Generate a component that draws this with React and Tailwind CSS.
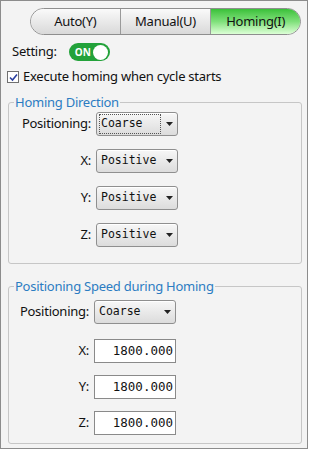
import React, { useState } from 'react';

const SelectBox = ({ value, focused }) => (
  <div className="w-[82px] h-[24px] rounded-[3px] border border-[#8f8f8f] bg-gradient-to-b from-[#f7f7f7] to-[#dcdcdc] flex items-center pl-[2px] pr-[4px] shadow-[inset_0_1px_0_#ffffff]">
    <div className={`flex-1 h-[20px] flex items-center pl-[1px] mr-[5px] ${focused ? 'border border-dotted border-[#555]' : 'border border-transparent'}`}>
      <span className="font-['DejaVu_Sans_Mono',monospace] text-[11.5px] tracking-normal text-[#111]">{value}</span>
    </div>
    <svg width="7" height="4" viewBox="0 0 7 4">
      <polygon points="0,0 7,0 3.5,4" fill="#222" />
    </svg>
  </div>
);

const NumInput = ({ value }) => (
  <div className="w-[82px] h-[24px] border border-[#8a8a8a] bg-white flex items-center justify-end pr-[2px]">
    <span className="font-['DejaVu_Sans_Mono',monospace] text-[12.5px] tracking-normal text-[#111]">{value}</span>
  </div>
);

const Row = ({ label, labelW, className = '', children }) => (
  <div className={`flex items-center ${className}`}>
    <span className={`${labelW} text-right pr-[5px] text-[13px] text-[#111]`}>{label}</span>
    {children}
  </div>
);

const App = () => {
  const [tab, setTab] = useState('homing');
  const tabs = [
    { id: 'auto', label: 'Auto(Y)', w: 'w-[89px]' },
    { id: 'manual', label: 'Manual(U)', w: 'w-[91px]' },
    { id: 'homing', label: 'Homing(I)', w: 'w-[90px]' },
  ];

  return (
    <div className="w-[308px] h-[449px] border border-[#8c8c8c] bg-[#f3f3f3] font-['Noto_Sans',sans-serif] tracking-[-0.25px] text-[#111] pt-[7px]">
      {/* Mode tabs */}
      <div className="ml-[29px] flex h-[27px] w-[271px] rounded-full border border-[#8e8e8e] overflow-hidden">
        {tabs.map((t, i) => (
          <button
            key={t.id}
            onClick={() => setTab(t.id)}
            className={`${t.w} h-full text-[13px] flex items-center justify-center ${i > 0 ? 'border-l border-[#9a9a9a]' : ''} ${
              tab === t.id
                ? 'bg-gradient-to-b from-[#38c138] via-[#7ee07a] to-[#dcffd6]'
                : 'bg-gradient-to-b from-[#fafafa] to-[#d9d9d9]'
            }`}
          >
            {t.label}
          </button>
        ))}
      </div>

      {/* Setting toggle */}
      <div className="flex items-center mt-[8px] h-[18px]">
        <span className="ml-[11px] text-[13px]">Setting:</span>
        <div className="ml-[12px] w-[41px] h-[18px] rounded-full bg-[#23a23a] flex items-center justify-between pl-[6px] pr-[2px]">
          <span className="text-white text-[10px] font-bold leading-none tracking-normal">ON</span>
          <span className="w-[15px] h-[15px] rounded-full bg-white" />
        </div>
      </div>

      {/* Checkbox */}
      <div className="flex items-center mt-[8px] h-[16px]">
        <div className="ml-[6px] w-[12px] h-[12px] border border-[#707070] bg-white flex items-center justify-center">
          <svg width="9" height="9" viewBox="0 0 9 9">
            <path d="M1 4.5 L3.5 7 L8 1.5" stroke="#2a3fa0" strokeWidth="1.6" fill="none" />
          </svg>
        </div>
        <span className="ml-[4px] text-[13px]">Execute homing when cycle starts</span>
      </div>

      {/* Homing Direction */}
      <fieldset className="mx-[7px] mt-[8px] w-[294px] h-[171px] border border-[#c6c6c6] rounded-[3px]">
        <legend className="ml-[5px] px-[1px] text-[13px] text-[#2b7cc2] leading-[18px]">Homing Direction</legend>
        <div className="flex flex-col gap-[13px] mt-[1px]">
          <Row label="Positioning:" labelW="w-[87px]">
            <SelectBox value="Coarse" focused />
          </Row>
          <Row label="X:" labelW="w-[87px]">
            <SelectBox value="Positive" />
          </Row>
          <Row label="Y:" labelW="w-[87px]">
            <SelectBox value="Positive" />
          </Row>
          <Row label="Z:" labelW="w-[87px]">
            <SelectBox value="Positive" />
          </Row>
        </div>
      </fieldset>

      {/* Positioning Speed during Homing */}
      <fieldset className="mx-[7px] mt-[13px] w-[294px] h-[167px] border border-[#c6c6c6] rounded-[3px]">
        <legend className="ml-[5px] px-[1px] text-[13px] text-[#2b7cc2] leading-[18px]">Positioning Speed during Homing</legend>
        <div className="flex flex-col gap-[12px] mt-[5px]">
          <Row label="Positioning:" labelW="w-[85px]" className="mb-[3px]">
            <SelectBox value="Coarse" />
          </Row>
          <Row label="X:" labelW="w-[85px]">
            <NumInput value="1800.000" />
          </Row>
          <Row label="Y:" labelW="w-[85px]">
            <NumInput value="1800.000" />
          </Row>
          <Row label="Z:" labelW="w-[85px]">
            <NumInput value="1800.000" />
          </Row>
        </div>
      </fieldset>
    </div>
  );
};

export default App;
